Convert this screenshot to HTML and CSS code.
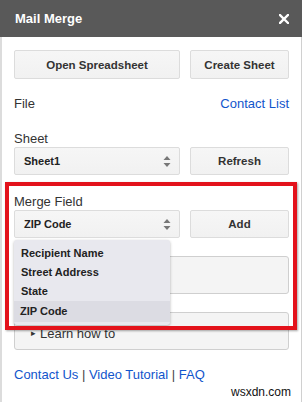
FILE: index.html
```html
<!DOCTYPE html>
<html lang="en">
<head>
  <meta charset="UTF-8">
  <title>Mail Merge</title>
  <link rel="stylesheet" href="styles.css">
</head>
<body>
  <div class="dialog">
    <div class="header">
      <span class="title">Mail Merge</span>
      <svg class="close" width="10" height="10" viewBox="0 0 10 10"><path d="M1 1L9 9M9 1L1 9" stroke="#fff" stroke-width="2.4" stroke-linecap="square"/></svg>
    </div>
    <div class="content">
      <div class="row top-row">
        <div class="btn">Open Spreadsheet</div>
        <div class="btn">Create Sheet</div>
      </div>
      <div class="file-row">
        <span class="label">File</span>
        <a class="link" href="#">Contact List</a>
      </div>
      <div class="label field-label">Sheet</div>
      <div class="row">
        <div class="select">
          <span>Sheet1</span>
          <svg width="8" height="11" viewBox="0 0 8 11"><path d="M4 0L7.5 4H0.5Z M4 11L7.5 7H0.5Z" fill="#777"/></svg>
        </div>
        <div class="btn short">Refresh</div>
      </div>
      <div class="label field-label">Merge Field</div>
      <div class="row">
        <div class="select">
          <span>ZIP Code</span>
          <svg width="8" height="11" viewBox="0 0 8 11"><path d="M4 0L7.5 4H0.5Z M4 11L7.5 7H0.5Z" fill="#777"/></svg>
        </div>
        <div class="btn short">Add</div>
      </div>
      <div class="box"></div>
      <div class="box learn"><span class="caret">&#9656;</span> Learn how to</div>
      <div class="footer">
        <a class="link" href="#">Contact Us</a> | <a class="link" href="#">Video Tutorial</a> | <a class="link" href="#">FAQ</a>
      </div>
      <div class="watermark">wsxdn.com</div>
    </div>

    <div class="dropdown">
      <div class="option">Recipient Name</div>
      <div class="option">Street Address</div>
      <div class="option">State</div>
      <div class="option active">ZIP Code</div>
    </div>
    <div class="highlight"></div>
  </div>
</body>
</html>
```

FILE: styles.css
```css
body { margin: 0; font-family: Arial, "Liberation Sans", sans-serif; background: #fff; color: #333; }
.dialog { position: relative; width: 302px; height: 402px; overflow: hidden; }
.header { height: 37px; background: #595959; display: flex; align-items: center; justify-content: space-between; padding: 0 13px 0 15px; }
.title { color: #fff; font-size: 13px; font-weight: bold; }
.content { height: 365px; box-sizing: border-box; border-left: 2px solid #dcdcdc; border-right: 1px solid #d0d0d0; padding: 13px 12px 0 12px; }
.row { display: grid; grid-template-columns: 166px 1fr; gap: 10px; }
.btn { height: 29px; box-sizing: border-box; border: 1px solid #dcdcdc; border-radius: 2px; background: linear-gradient(#f6f6f6, #f1f1f1); font-size: 11.5px; font-weight: bold; color: #333; display: flex; align-items: center; justify-content: center; }
.btn.short { height: 28px; }
.label { font-size: 13px; line-height: 16px; color: #333; }
.file-row { margin-top: 17px; display: flex; justify-content: space-between; font-size: 13px; line-height: 16px; }
.link { color: #15c; text-decoration: none; }
.field-label { margin-top: 19px; }
.select { height: 28px; box-sizing: border-box; border: 1px solid #dcdcdc; border-radius: 2px; background: linear-gradient(#f6f6f6, #f1f1f1); display: flex; align-items: center; justify-content: space-between; padding: 0 8px 0 9px; font-size: 11px; font-weight: bold; color: #222; }
.box { margin-top: 18px; height: 38px; box-sizing: border-box; border: 1px solid #cfcfcf; border-radius: 3px; background: #f4f4f4; }
.learn { display: flex; align-items: center; padding: 4px 0 0 16px; font-size: 13px; color: #333; }
.caret { font-size: 9px; margin-right: 4px; }
.footer { margin-top: 17px; font-size: 13px; line-height: 16px; color: #444; }
.watermark { margin: 2px -2px 0 0; text-align: right; font-size: 12px; line-height: 14px; color: #111; }
.dropdown { position: absolute; left: 14px; top: 240px; width: 156px; box-sizing: border-box; padding: 4px 0 3px; background: #e8e8ee; border-radius: 3px; box-shadow: 0 1px 3px rgba(0, 0, 0, 0.3); }
.option { height: 19px; line-height: 19px; padding-left: 7px; font-size: 11px; font-weight: bold; color: #222; }
.option.active { background: #dcdce3; height: 21px; line-height: 21px; padding-left: 6px; }
.highlight { position: absolute; left: 5px; top: 182px; width: 292px; height: 148px; box-sizing: border-box; border: 4px solid #e3121b; box-shadow: 1px 1px 2px rgba(0, 0, 0, 0.35); }
```
